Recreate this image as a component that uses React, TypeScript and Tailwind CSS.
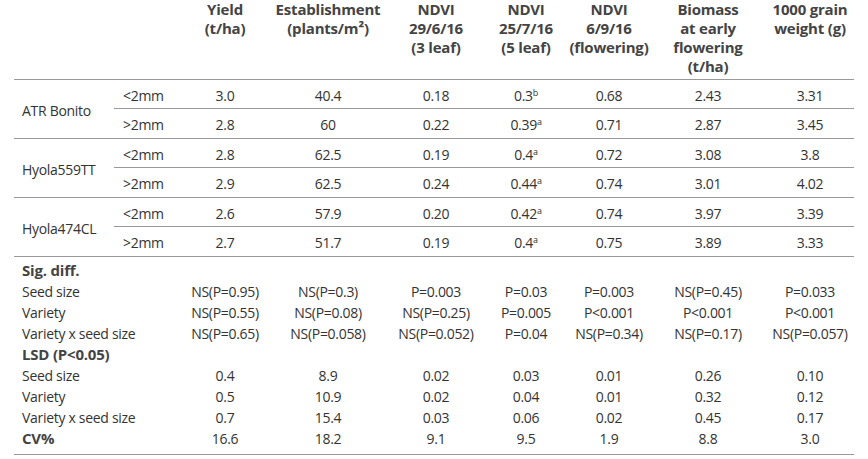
const cols = 'grid grid-cols-[98px_108px_108px_72px_94px_104px_94px]';

const headers = [
  ['Yield', '(t/ha)'],
  ['Establishment', '(plants/m²)'],
  ['NDVI', '29/6/16', '(3 leaf)'],
  ['NDVI', '25/7/16', '(5 leaf)'],
  ['NDVI', '6/9/16', '(flowering)'],
  ['Biomass', 'at early', 'flowering', '(t/ha)'],
  ['1000 grain', 'weight (g)'],
];

type Val = string | [string, string];

const groups: { name: string; rows: { size: string; vals: Val[] }[] }[] = [
  {
    name: 'ATR Bonito',
    rows: [
      { size: '<2mm', vals: ['3.0', '40.4', '0.18', ['0.3', 'b'], '0.68', '2.43', '3.31'] },
      { size: '>2mm', vals: ['2.8', '60', '0.22', ['0.39', 'a'], '0.71', '2.87', '3.45'] },
    ],
  },
  {
    name: 'Hyola559TT',
    rows: [
      { size: '<2mm', vals: ['2.8', '62.5', '0.19', ['0.4', 'a'], '0.72', '3.08', '3.8'] },
      { size: '>2mm', vals: ['2.9', '62.5', '0.24', ['0.44', 'a'], '0.74', '3.01', '4.02'] },
    ],
  },
  {
    name: 'Hyola474CL',
    rows: [
      { size: '<2mm', vals: ['2.6', '57.9', '0.20', ['0.42', 'a'], '0.74', '3.97', '3.39'] },
      { size: '>2mm', vals: ['2.7', '51.7', '0.19', ['0.4', 'a'], '0.75', '3.89', '3.33'] },
    ],
  },
];

const stats: { label: string; bold?: boolean; vals?: string[] }[] = [
  { label: 'Sig. diff.', bold: true },
  { label: 'Seed size', vals: ['NS(P=0.95)', 'NS(P=0.3)', 'P=0.003', 'P=0.03', 'P=0.003', 'NS(P=0.45)', 'P=0.033'] },
  { label: 'Variety', vals: ['NS(P=0.55)', 'NS(P=0.08)', 'NS(P=0.25)', 'P=0.005', 'P<0.001', 'P<0.001', 'P<0.001'] },
  { label: 'Variety x seed size', vals: ['NS(P=0.65)', 'NS(P=0.058)', 'NS(P=0.052)', 'P=0.04', 'NS(P=0.34)', 'NS(P=0.17)', 'NS(P=0.057)'] },
  { label: 'LSD (P<0.05)', bold: true },
  { label: 'Seed size', vals: ['0.4', '8.9', '0.02', '0.03', '0.01', '0.26', '0.10'] },
  { label: 'Variety', vals: ['0.5', '10.9', '0.02', '0.04', '0.01', '0.32', '0.12'] },
  { label: 'Variety x seed size', vals: ['0.7', '15.4', '0.03', '0.06', '0.02', '0.45', '0.17'] },
  { label: 'CV%', bold: true, vals: ['16.6', '18.2', '9.1', '9.5', '1.9', '8.8', '3.0'] },
];

function Cell({ v, last }: { v: Val; last: boolean }) {
  return (
    <div className={`flex justify-center whitespace-nowrap ${last ? 'pl-[6px]' : ''}`}>
      {typeof v === 'string' ? (
        v
      ) : (
        <span>
          {v[0]}
          <sup className="text-[9px] relative -top-[5px]">{v[1]}</sup>
        </span>
      )}
    </div>
  );
}

export default function App() {
  return (
    <div className="w-[868px] h-[459px] bg-white text-[#333] font-['Open_Sans','Noto_Sans',sans-serif] text-[14px] tracking-[-0.3px]">
      <div className="ml-[14px] w-[840px]">
        {/* header */}
        <div className="flex border-b border-[#9a9a9a] h-[80px] text-[15px] font-bold leading-[19px] text-[#444] tracking-[-0.2px]">
          <div className="w-[162px]" />
          <div className={cols}>
            {headers.map((h, i) => (
              <div key={i} className={`flex flex-col items-center whitespace-nowrap ${i === 6 ? 'pl-[6px]' : ''}`}>
                {h.map((l) => (
                  <span key={l}>{l}</span>
                ))}
              </div>
            ))}
          </div>
        </div>

        {/* data */}
        {groups.map((g) => (
          <div key={g.name} className="flex border-b border-[#9a9a9a]">
            <div className="w-[100px] flex items-center pl-[8px] pt-[2px]">{g.name}</div>
            <div className="flex-1 flex flex-col">
              {g.rows.map((r, ri) => (
                <div key={r.size} className={`flex h-[29px] items-center pt-[2px] ${ri === 0 ? 'border-b border-[#9a9a9a]' : 'h-[28px]'}`}>
                  <div className="w-[62px] pl-[9px]">{r.size}</div>
                  <div className={cols}>
                    {r.vals.map((v, i) => (
                      <Cell key={i} v={v} last={i === 6} />
                    ))}
                  </div>
                </div>
              ))}
            </div>
          </div>
        ))}

        {/* stats */}
        <div className="pt-[3px] pb-[5px] border-b border-[#9a9a9a] leading-[21px]">
          {stats.map((s, si) => (
            <div key={si} className="flex h-[21px]">
              <div className={`w-[162px] pl-[8px] ${s.bold ? 'font-bold text-[15px] text-[#444] tracking-[-0.2px]' : ''}`}>{s.label}</div>
              {s.vals && (
                <div className={cols}>
                  {s.vals.map((v, i) => (
                    <Cell key={i} v={v} last={i === 6} />
                  ))}
                </div>
              )}
            </div>
          ))}
        </div>
      </div>
    </div>
  );
}
